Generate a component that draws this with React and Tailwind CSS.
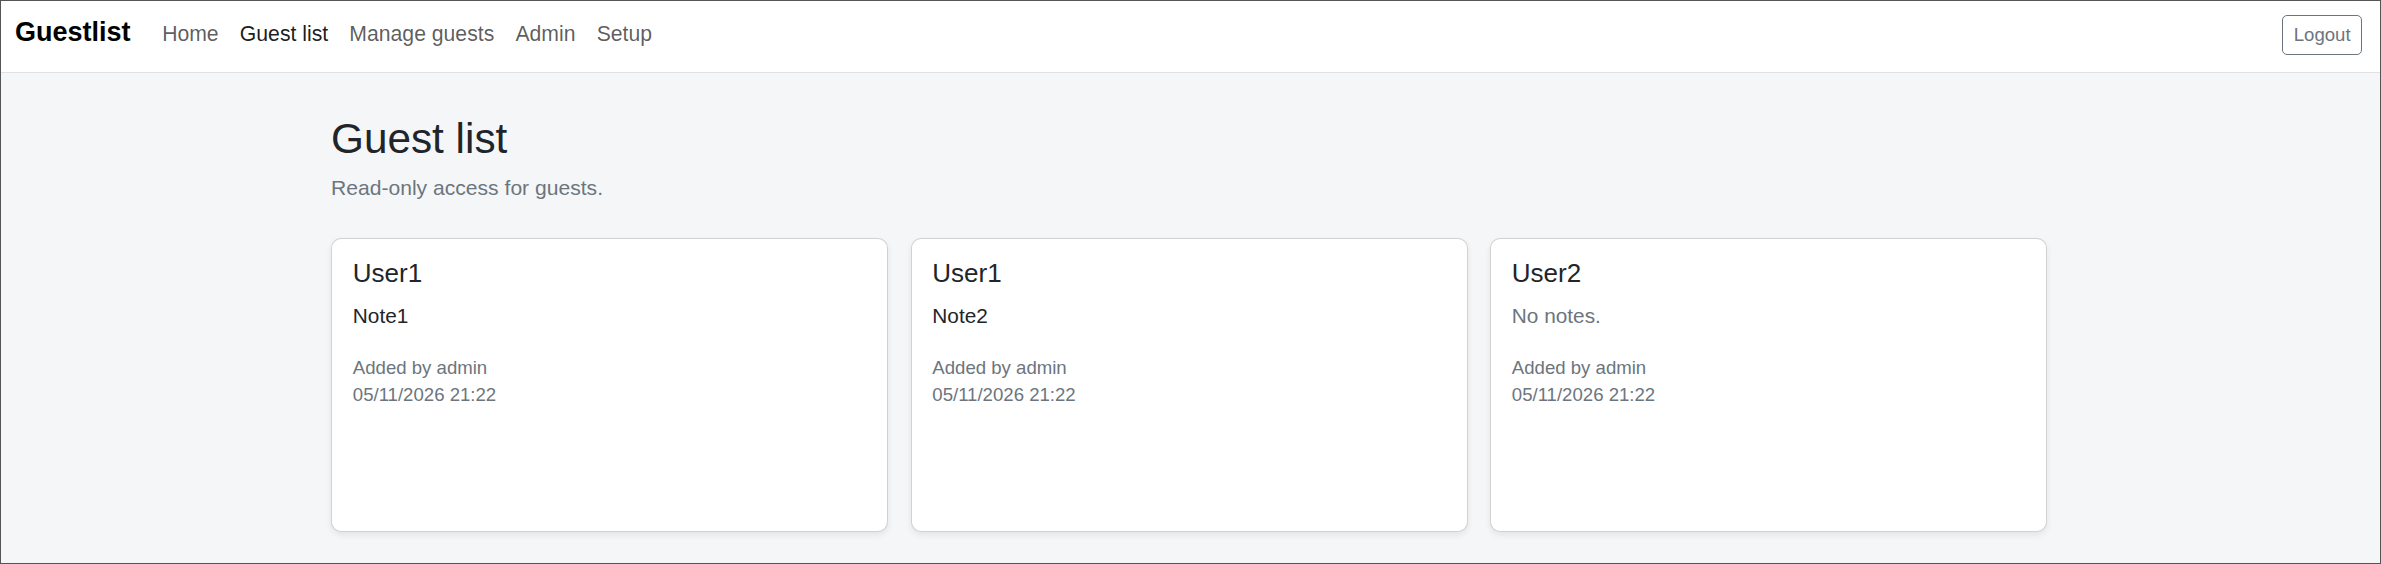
import React from 'react'

const NAV = [
  { label: 'Home' },
  { label: 'Guest list', active: true },
  { label: 'Manage guests' },
  { label: 'Admin' },
  { label: 'Setup' },
]

const GUESTS = [
  { id: 1, name: 'User1', note: 'Note1', by: 'admin', at: '05/11/2026 21:22' },
  { id: 2, name: 'User1', note: 'Note2', by: 'admin', at: '05/11/2026 21:22' },
  { id: 3, name: 'User2', note: '', by: 'admin', at: '05/11/2026 21:22' },
]

export default function App() {
  return (
    <div className="h-[564px] overflow-hidden border border-[#555] bg-[#f5f6f8] font-['Liberation_Sans',Arial,sans-serif]">
      {/* Navbar */}
      <nav className="h-[72px] bg-white border-b border-[#dee2e6] flex items-center pl-[14px] pr-[18px] pb-[6px]">
        <span className="text-[27px] leading-[31px] font-bold text-black mr-[21px] -mt-[2px]">Guestlist</span>
        <ul className="flex items-center">
          {NAV.map(n => (
            <li key={n.label}>
              <a className={`block px-[10.6px] text-[21.2px] leading-[31.2px] ${n.active ? 'text-black/90' : 'text-black/65'}`}>
                {n.label}
              </a>
            </li>
          ))}
        </ul>
        <button className="ml-auto mt-[3px] border border-[#6c757d] rounded-[5px] px-[10.4px] py-[5.2px] text-[18.6px] leading-[27.3px] text-[#6c757d] bg-transparent">
          Logout
        </button>
      </nav>

      {/* Content */}
      <main className="w-[1716px] ml-[330px] pt-[41px]">
        <h1 className="text-[42.3px] leading-[50px] font-normal text-[#212529] mb-[8px]">Guest list</h1>
        <p className="text-[21.1px] leading-[31.2px] text-[#6c757d] mb-[35px]">Read-only access for guests.</p>

        <div className="grid grid-cols-3 gap-[22.5px]">
          {GUESTS.map(g => (
            <div key={g.id} className="h-[294px] bg-white border border-black/[0.175] rounded-[10px] shadow-[0_3px_6px_rgba(0,0,0,0.075)] pt-[19px] px-[20.8px]">
              <h5 className="text-[26px] leading-[31.2px] text-[#212529] mb-[11px]">{g.name}</h5>
              <p className={`text-[20.8px] leading-[31.2px] mb-[22px] ${g.note ? 'text-[#212529]' : 'text-[#6c757d]'}`}>
                {g.note || 'No notes.'}
              </p>
              <div className="text-[18.6px] leading-[27.3px] text-[#6c757d]">
                <div>Added by {g.by}</div>
                <div>{g.at}</div>
              </div>
            </div>
          ))}
        </div>
      </main>
    </div>
  )
}
